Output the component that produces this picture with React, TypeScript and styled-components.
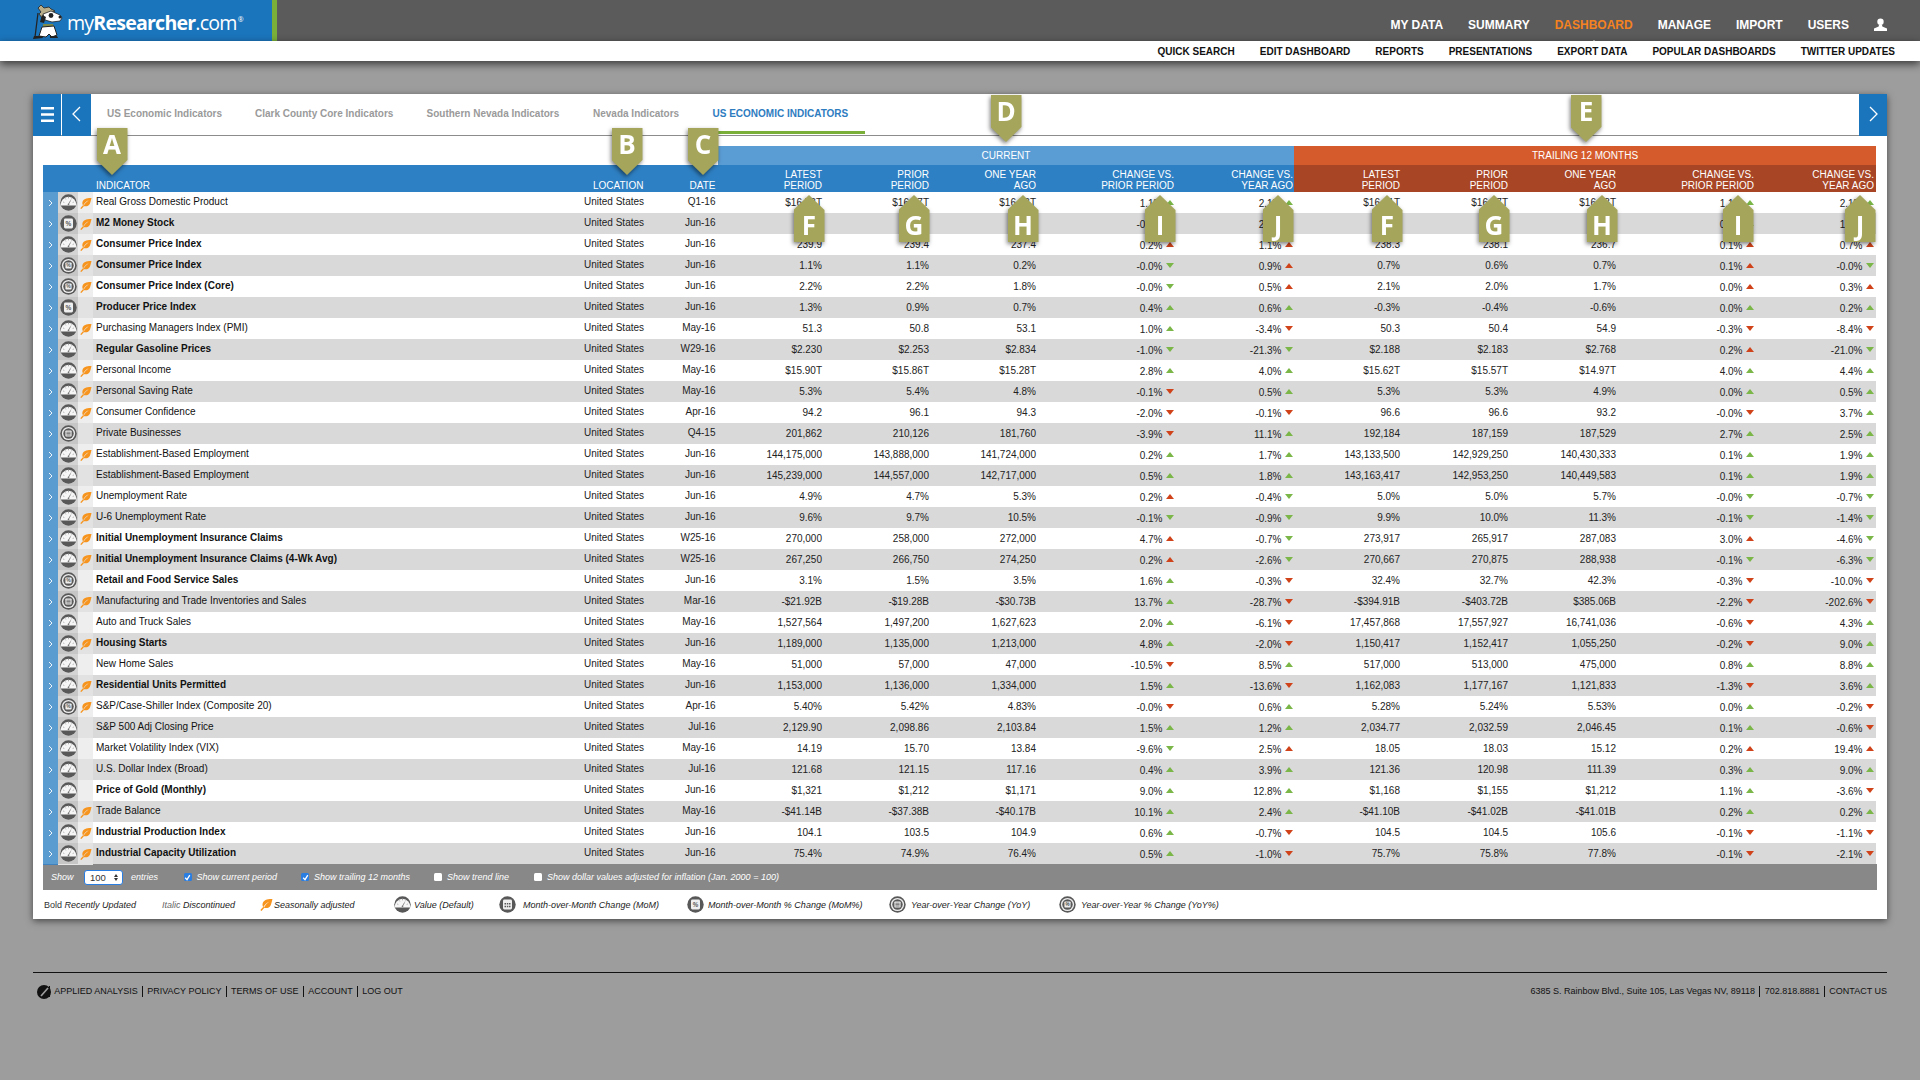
import React from "react";
import styled, { createGlobalStyle } from "styled-components";

const Global = createGlobalStyle`
  html, body { margin: 0; padding: 0; background: #9d9d9d; }
  body { font-family: "Liberation Sans", Arial, sans-serif; color: #222; height: 1080px; overflow: hidden; }
`;

const GRID =
  "15px 20px 15px 487px 70px 68px 107px 107px 107px 136px 119px 109px 108px 108px 136px 121px";

const Page = styled.div`
  width: 1920px;
  height: 1080px;
  position: relative;
`;

const TopBar = styled.header`
  height: 41px;
  background: #5b5b5b;
  display: flex;
  justify-content: space-between;
  align-items: stretch;
`;
const LogoBox = styled.div`
  width: 277px;
  background: #1b75bc;
  border-right: 5px solid #7ab03a;
  display: flex;
  align-items: center;
  padding-left: 33px;
  box-sizing: border-box;
`;
const LogoText = styled.div`
  font-family: "Open Sans", sans-serif;
  font-size: 19.6px;
  letter-spacing: -0.8px;
  color: #fff;
  margin: 3px 0 0 4px;
  white-space: nowrap;
  b { font-weight: 700; }
  sup { font-size: 7px; vertical-align: 8px; line-height: 0; margin-left: 1px; }
`;
const MainNav = styled.nav`
  display: flex;
  align-items: center;
  gap: 25px;
  padding-right: 33px;
  padding-top: 8px;
`;
const MainLink = styled.span<{ $active?: boolean }>`
  font-size: 12px;
  font-weight: 700;
  color: ${(p) => (p.$active ? "#f58220" : "#fff")};
  position: relative;
  ${(p) =>
    p.$active &&
    `&::after{content:"";position:absolute;left:50%;margin-left:-4px;bottom:-12px;border:4px solid transparent;border-top:0;border-bottom-color:#fff;}`}
`;
const SubBar = styled.div`
  height: 20px;
  background: #fff;
  box-shadow: 0 3px 9px rgba(0, 0, 0, 0.65);
  display: flex;
  justify-content: flex-end;
  align-items: center;
  gap: 25px;
  padding-right: 25px;
  position: relative;
`;
const SubLink = styled.span`
  font-size: 10px;
  font-weight: 700;
  color: #111;
`;

const Card = styled.main`
  position: relative;
  margin: 33px 0 0 33px;
  width: 1854px;
  height: 825px;
  background: #fff;
  box-shadow: 0 2px 7px rgba(0, 0, 0, 0.55);
`;
const TabBar = styled.div`
  height: 41px;
  border-bottom: 1px solid #8c8c8c;
  display: flex;
  align-items: stretch;
  box-sizing: content-box;
`;
const SquareButton = styled.div<{ $w: number }>`
  width: ${(p) => p.$w}px;
  background: #1b75bc;
  display: flex;
  align-items: center;
  justify-content: center;
  margin-bottom: -1px;
  padding-bottom: 2px;
  box-sizing: border-box;
`;
const Divider = styled.div`
  width: 1px;
  background: #fff;
`;
const Tabs = styled.div`
  flex: 1;
  display: flex;
  padding-left: 16px;
`;
const Tab = styled.div<{ $w: number; $active?: boolean }>`
  width: ${(p) => p.$w}px;
  font-size: 10px;
  font-weight: 700;
  color: ${(p) => (p.$active ? "#2e7cc0" : "#9a9a9a")};
  padding-top: 14px;
  white-space: nowrap;
  position: relative;
  ${(p) =>
    p.$active &&
    `&::after{content:"";position:absolute;left:-16px;width:168px;bottom:1px;height:3px;background:#7ab03a;}`}
`;

const TableBox = styled.div`
  margin: 10px 0 0 10px;
  width: 1833px;
`;
const GroupRow = styled.div`
  display: grid;
  grid-template-columns: 675px 576px 582px;
  height: 19px;
`;
const GroupCell = styled.div<{ $bg: string }>`
  background: ${(p) => p.$bg};
  color: #fff;
  font-size: 10px;
  display: flex;
  align-items: center;
  justify-content: center;
`;
const HeadRow = styled.div`
  display: grid;
  grid-template-columns: ${GRID};
  height: 27px;
`;
const HeadCell = styled.div<{ $bg: string; $pad?: number; $left?: boolean; $pl?: number }>`
  background: ${(p) => p.$bg};
  color: #fff;
  font-size: 10px;
  line-height: 11px;
  display: flex;
  align-items: flex-end;
  justify-content: ${(p) => (p.$left ? "flex-start" : "flex-end")};
  text-align: ${(p) => (p.$left ? "left" : "right")};
  padding: 0 ${(p) => p.$pad ?? 0}px 1px ${(p) => p.$pl ?? 0}px;
  white-space: pre-line;
`;
const Row = styled.div<{ $alt: boolean }>`
  display: grid;
  grid-template-columns: ${GRID};
  height: 21px;
  background: ${(p) => (p.$alt ? "#d9d9d9" : "#fff")};
  font-size: 10px;
  line-height: 21px;
`;
const ChevCell = styled.div`
  background: #5a9bd0;
  border-bottom: 1px solid #3f82bd;
  display: flex;
  align-items: center;
  justify-content: center;
`;
const IconCell = styled.div<{ $alt: boolean }>`
  background: ${(p) => (p.$alt ? "#c6c6c6" : "#d4d4d4")};
  border-bottom: 1px solid #e6e6e6;
  display: flex;
  align-items: center;
  justify-content: center;
`;
const LeafCell = styled.div<{ $alt: boolean }>`
  background: ${(p) => (p.$alt ? "#e2e2e2" : "#eeeeee")};
  display: flex;
  align-items: center;
  justify-content: center;
`;
const NameCell = styled.div<{ $bold: boolean }>`
  padding-left: 3px;
  font-weight: ${(p) => (p.$bold ? 700 : 400)};
  color: #111;
  margin-top: -1px;
  white-space: nowrap;
`;
const LocationCell = styled.div`
  padding-left: 4px;
  margin-top: -1px;
  white-space: nowrap;
`;
const DateCell = styled.div`
  text-align: right;
  padding-right: 2.5px;
  margin-top: -1px;
`;
const NumCell = styled.div`
  text-align: right;
  padding-right: 3px;
`;
const ChangeCell = styled.div<{ $pad: number }>`
  display: flex;
  justify-content: flex-end;
  align-items: center;
  gap: 3.5px;
  padding-right: ${(p) => p.$pad}px;
  padding-top: 1px;
  height: 21px;
`;
const Tri = styled.span<{ $up: boolean; $color: string }>`
  width: 0;
  height: 0;
  border-left: 4px solid transparent;
  border-right: 4px solid transparent;
  ${(p) => (p.$up ? "border-bottom" : "border-top")}: 5px solid ${(p) => p.$color};
  margin-top: -2px;
`;

const ControlBar = styled.div`
  width: 1834px;
  height: 26px;
  background: #888;
  color: #fff;
  font-size: 9px;
  font-style: italic;
  display: grid;
  grid-template-columns: 33px 47px 52.5px 117.5px 133px 100px auto;
  align-items: center;
  padding-left: 8px;
  box-sizing: border-box;
`;
const SelectBox = styled.div`
  width: 39px;
  height: 15px;
  border: 1px solid #2a7de1;
  border-radius: 3px;
  background: #fff;
  color: #333;
  font-style: normal;
  font-size: 9.5px;
  box-sizing: border-box;
  display: flex;
  align-items: center;
  justify-content: space-between;
  padding: 0 4px 0 5px;
`;
const Spin = styled.span`
  display: flex;
  flex-direction: column;
  gap: 1px;
`;
const SpinTri = styled.i<{ $up?: boolean }>`
  width: 0;
  height: 0;
  border-left: 2.5px solid transparent;
  border-right: 2.5px solid transparent;
  ${(p) => (p.$up ? "border-bottom" : "border-top")}: 3.5px solid #333;
`;
const CheckWrap = styled.label`
  display: flex;
  align-items: center;
  gap: 5px;
  white-space: nowrap;
`;
const CheckBox = styled.span<{ $on: boolean }>`
  width: 8px;
  height: 8px;
  border-radius: 1.5px;
  background: ${(p) => (p.$on ? "#2a7de1" : "#fff")};
  display: flex;
  align-items: center;
  justify-content: center;
`;
const Legend = styled.div`
  height: 29px;
  display: grid;
  grid-template-columns: 118px 98px 134px 105px 188px 202px 170px auto;
  align-items: center;
  padding-left: 1px;
  font-size: 9px;
  font-style: italic;
  color: #222;
`;
const LegendItem = styled.div<{ $gap?: number }>`
  display: flex;
  align-items: center;
  gap: ${(p) => p.$gap ?? 5}px;
  white-space: nowrap;
`;
const LegendTextRun = styled.span`
  white-space: pre;
`;
const LegendBold = styled.span`
  font-style: normal;
  color: #333;
`;
const LegendItal = styled.span`
  color: #666;
`;
const FootRule = styled.div`
  margin: 53px 0 0 33px;
  width: 1854px;
  border-top: 1px solid #111;
`;
const Foot = styled.footer`
  width: 1854px;
  margin: 11px 0 0 33px;
  display: flex;
  justify-content: space-between;
  align-items: center;
  font-size: 9px;
  color: #111;
  height: 15px;
`;
const FootGroup = styled.div`
  display: flex;
  align-items: center;
`;
const FootLink = styled.span`
  padding: 0 4.3px;
  border-left: 1px solid #111;
  line-height: 11px;
  white-space: nowrap;
  &:first-of-type { border-left: 0; }
  &:last-child { padding-right: 0; }
`;
const FootMark = styled.span`
  margin: 0 -2px 0 4px;
  display: flex;
`;

const BadgeWrap = styled.div<{ $x: number; $y: number }>`
  position: absolute;
  left: ${(p) => p.$x - 33 - 15.5}px;
  top: ${(p) => p.$y - 94}px;
  width: 31px;
  height: 47px;
  filter: drop-shadow(-1px 2px 2px rgba(0, 0, 0, 0.5));
`;
const BadgeShape = styled.div<{ $up?: boolean }>`
  width: 31px;
  height: 47px;
  background: #a5a65b;
  color: #fff;
  font-family: "Open Sans", sans-serif;
  font-weight: 700;
  font-size: 26px;
  text-align: center;
  line-height: 33px;
  box-sizing: border-box;
  padding-top: ${(p) => (p.$up ? 14 : 0)}px;
  clip-path: ${(p) =>
    p.$up
      ? "polygon(50% 0, 100% 15px, 100% 100%, 0 100%, 0 15px)"
      : "polygon(0 0, 100% 0, 100% 32px, 50% 100%, 0 32px)"};
`;

const Badge = ({ l, x, y, up }: { l: string; x: number; y: number; up?: boolean }) => (
  <BadgeWrap $x={x} $y={y}>
    <BadgeShape $up={up}>{l}</BadgeShape>
  </BadgeWrap>
);

type Kind = "g" | "m" | "mp" | "y" | "yp";

const MetricIcon = ({ kind, size = 17 }: { kind: Kind; size?: number }) => {
  const dk = "#585858";
  const ring = kind === "y" || kind === "yp";
  return (
    <svg width={size} height={size} viewBox="0 0 17 17">
      <circle cx="8.5" cy="8.5" r="8.2" fill={dk} />
      {kind === "g" && (
        <>
          <path d="M1 11.6A7.6 7.6 0 1 1 16 11.6Z" fill="#f6f6f6" />
          <path d="M3.2 8l1.1.5M5.2 4.4l.7 1M8.5 3v1.3M11.8 4.4l-.7 1M13.8 8l-1.1.5" stroke="#8a8a8a" strokeWidth="0.7" />
          <path d="M8.5 10.2L10.6 6.4" stroke="#777" strokeWidth="0.8" />
          <circle cx="8.5" cy="10.4" r="0.8" fill="#777" />
        </>
      )}
      {ring && (
        <>
          <circle cx="8.5" cy="8.5" r="6.6" fill="#eee" />
          <circle cx="8.5" cy="8.5" r="5.2" fill={dk} />
        </>
      )}
      {(kind === "m" || kind === "mp") && (
        <rect x="4" y="3.6" width="9" height="9.8" rx="1.4" fill="#efefef" />
      )}
      {ring && <rect x="5.4" y="5.4" width="6.2" height="6.2" rx="0.8" fill="#efefef" />}
      {kind === "m" && (
        <path d="M5.5 7h1.5v1.5H5.5zM7.8 7h1.5v1.5H7.8zM10 7h1.5v1.5H10zM5.5 9.8h1.5v1.5H5.5zM7.8 9.8h1.5v1.5H7.8zM10 9.8h1.5v1.5H10z" fill={dk} />
      )}
      {kind === "y" && <path d="M6.4 7.2h4.2M6.4 8.6h4.2M6.4 10h4.2" stroke={dk} strokeWidth="0.8" />}
      {kind === "mp" && (
        <text x="8.5" y="11" fontSize="6.5" textAnchor="middle" fill={dk} fontFamily="Liberation Sans" fontWeight="700">%</text>
      )}
      {kind === "yp" && (
        <text x="8.5" y="10.4" fontSize="5" textAnchor="middle" fill={dk} fontFamily="Liberation Sans" fontWeight="700">%</text>
      )}
    </svg>
  );
};

const Leaf = ({ size = 12 }: { size?: number }) => (
  <svg width={size} height={size} viewBox="0 0 12 12">
    <path d="M11.5 1C7.2.8 3 1.8 2.4 5.2 2.1 6.6 2.5 7.7 3.2 8.4 4.4 5.8 6.4 4.2 8.8 3.2 6.6 4.8 4.6 6.7 3.6 8.9 5.6 9.8 8.8 9.2 10 6.4 10.7 4.8 11 3 11.5 1Z" fill="#f7941e" />
    <path d="M.8 11.6L3.6 8.5" stroke="#f7941e" strokeWidth="1.3" fill="none" />
  </svg>
);

const Chevron = ({ dir, size, color, w }: { dir: "l" | "r"; size: number; color: string; w: number }) => (
  <svg width={size / 2 + 2} height={size + 2} viewBox={`0 0 ${size / 2 + 2} ${size + 2}`}>
    <polyline
      points={
        dir === "r"
          ? `1,1 ${size / 2 + 1},${size / 2 + 1} 1,${size + 1}`
          : `${size / 2 + 1},1 1,${size / 2 + 1} ${size / 2 + 1},${size + 1}`
      }
      fill="none"
      stroke={color}
      strokeWidth={w}
    />
  </svg>
);

const Hamburger = () => (
  <svg width="13" height="15" viewBox="0 0 13 15">
    <path d="M0 1.2h13M0 7.5h13M0 13.8h13" stroke="#fff" strokeWidth="2.4" />
  </svg>
);

const UserIcon = () => (
  <svg width="13" height="14" viewBox="0 0 13 14">
    <circle cx="6.5" cy="3.8" r="3.2" fill="#fff" />
    <path d="M5 6.5h3l.3 2L13 10.6V13H0v-2.4l4.7-2.1Z" fill="#fff" />
  </svg>
);

const Dog = () => (
  <svg width="30" height="36" viewBox="0 0 30 36">
    <path d="M8 2l3 3 5-1 2 2 4 2-4 2 1 3-9 3-4-5 2-2-3-4Z" fill="#b9ae8a" stroke="#222" strokeWidth="0.8" />
    <path d="M10 11l8-3 9 4 2 3-2 3-8 1-7-2Z" fill="#fff" stroke="#222" strokeWidth="0.8" />
    <circle cx="18" cy="12.5" r="2.4" fill="#222" />
    <circle cx="27" cy="14" r="1.5" fill="#222" />
    <path d="M9 12l-2 7 4 1 2-6Z" fill="#222" />
    <path d="M10 21h10l1 3-11 1Z" fill="#7d8a4a" />
    <path d="M9 24l12-1 3 9-5 2-3-3-3 3-7-1Z" fill="#fff" stroke="#222" strokeWidth="1" />
    <path d="M5 10L2 34" stroke="#222" strokeWidth="1.2" />
    <path d="M1 33l8 0 1 2-10 1Z" fill="#222" />
    <path d="M17 33h7l1 2h-8Z" fill="#222" />
  </svg>
);

const Mark = () => (
  <svg width="14" height="14" viewBox="0 0 14 14">
    <circle cx="7" cy="7" r="7" fill="#111" />
    <path d="M4 11L11 3" stroke="#9d9d9d" strokeWidth="1.6" />
  </svg>
);

const Check = () => (
  <svg width="7" height="7" viewBox="0 0 7 7">
    <path d="M1.2 3.8L3 5.6 5.8 1.2" stroke="#fff" strokeWidth="1.3" fill="none" />
  </svg>
);

type Rec = {
  n: string; b?: boolean; k: Kind; lf?: boolean; d: string;
  v: [string, string, string, string, string, string, string, string, string, string];
};
const G = "#7ab648";
const R = "#d0431a";

const rows: Rec[] = [
  { n: "Real Gross Domestic Product", k: "g", lf: true, d: "Q1-16", v: ["$16.53T", "$16.47T", "$16.03T", "1.1%|ug", "2.1%|ug", "$16.41T", "$16.27T", "$16.08T", "1.1%|ug", "2.1%|ug"] },
  { n: "M2 Money Stock", b: true, k: "mp", lf: true, d: "Jun-16", v: ["0.6%", "0.4%", "0.5%", "-0.6%|ug", "2.1%|ug", "0.5%", "0.5%", "0.5%", "0.9%|ug", "1.9%|ug"] },
  { n: "Consumer Price Index", b: true, k: "g", lf: true, d: "Jun-16", v: ["239.9", "239.4", "237.4", "0.2%|ur", "1.1%|ur", "238.3", "238.1", "236.7", "0.1%|ur", "0.7%|ur"] },
  { n: "Consumer Price Index", b: true, k: "yp", lf: true, d: "Jun-16", v: ["1.1%", "1.1%", "0.2%", "-0.0%|dg", "0.9%|ur", "0.7%", "0.6%", "0.7%", "0.1%|ur", "-0.0%|dg"] },
  { n: "Consumer Price Index (Core)", b: true, k: "yp", lf: true, d: "Jun-16", v: ["2.2%", "2.2%", "1.8%", "-0.0%|dg", "0.5%|ur", "2.1%", "2.0%", "1.7%", "0.0%|ur", "0.3%|ur"] },
  { n: "Producer Price Index", b: true, k: "mp", d: "Jun-16", v: ["1.3%", "0.9%", "0.7%", "0.4%|ug", "0.6%|ug", "-0.3%", "-0.4%", "-0.6%", "0.0%|ug", "0.2%|ug"] },
  { n: "Purchasing Managers Index (PMI)", k: "g", lf: true, d: "May-16", v: ["51.3", "50.8", "53.1", "1.0%|ug", "-3.4%|dr", "50.3", "50.4", "54.9", "-0.3%|dr", "-8.4%|dr"] },
  { n: "Regular Gasoline Prices", b: true, k: "g", d: "W29-16", v: ["$2.230", "$2.253", "$2.834", "-1.0%|dg", "-21.3%|dg", "$2.188", "$2.183", "$2.768", "0.2%|ur", "-21.0%|dg"] },
  { n: "Personal Income", k: "g", lf: true, d: "May-16", v: ["$15.90T", "$15.86T", "$15.28T", "2.8%|ug", "4.0%|ug", "$15.62T", "$15.57T", "$14.97T", "4.0%|ug", "4.4%|ug"] },
  { n: "Personal Saving Rate", k: "g", lf: true, d: "May-16", v: ["5.3%", "5.4%", "4.8%", "-0.1%|dr", "0.5%|ug", "5.3%", "5.3%", "4.9%", "0.0%|ug", "0.5%|ug"] },
  { n: "Consumer Confidence", k: "g", lf: true, d: "Apr-16", v: ["94.2", "96.1", "94.3", "-2.0%|dr", "-0.1%|dr", "96.6", "96.6", "93.2", "-0.0%|dr", "3.7%|ug"] },
  { n: "Private Businesses", k: "y", d: "Q4-15", v: ["201,862", "210,126", "181,760", "-3.9%|dr", "11.1%|ug", "192,184", "187,159", "187,529", "2.7%|ug", "2.5%|ug"] },
  { n: "Establishment-Based Employment", k: "g", lf: true, d: "Jun-16", v: ["144,175,000", "143,888,000", "141,724,000", "0.2%|ug", "1.7%|ug", "143,133,500", "142,929,250", "140,430,333", "0.1%|ug", "1.9%|ug"] },
  { n: "Establishment-Based Employment", k: "g", d: "Jun-16", v: ["145,239,000", "144,557,000", "142,717,000", "0.5%|ug", "1.8%|ug", "143,163,417", "142,953,250", "140,449,583", "0.1%|ug", "1.9%|ug"] },
  { n: "Unemployment Rate", k: "g", lf: true, d: "Jun-16", v: ["4.9%", "4.7%", "5.3%", "0.2%|ur", "-0.4%|dg", "5.0%", "5.0%", "5.7%", "-0.0%|dg", "-0.7%|dg"] },
  { n: "U-6 Unemployment Rate", k: "g", lf: true, d: "Jun-16", v: ["9.6%", "9.7%", "10.5%", "-0.1%|dg", "-0.9%|dg", "9.9%", "10.0%", "11.3%", "-0.1%|dg", "-1.4%|dg"] },
  { n: "Initial Unemployment Insurance Claims", b: true, k: "g", lf: true, d: "W25-16", v: ["270,000", "258,000", "272,000", "4.7%|ur", "-0.7%|dg", "273,917", "265,917", "287,083", "3.0%|ur", "-4.6%|dg"] },
  { n: "Initial Unemployment Insurance Claims (4-Wk Avg)", b: true, k: "g", lf: true, d: "W25-16", v: ["267,250", "266,750", "274,250", "0.2%|ur", "-2.6%|dg", "270,667", "270,875", "288,938", "-0.1%|dg", "-6.3%|dg"] },
  { n: "Retail and Food Service Sales", b: true, k: "yp", d: "Jun-16", v: ["3.1%", "1.5%", "3.5%", "1.6%|ug", "-0.3%|dr", "32.4%", "32.7%", "42.3%", "-0.3%|dr", "-10.0%|dr"] },
  { n: "Manufacturing and Trade Inventories and Sales", k: "y", lf: true, d: "Mar-16", v: ["-$21.92B", "-$19.28B", "-$30.73B", "13.7%|ug", "-28.7%|dr", "-$394.91B", "-$403.72B", "$385.06B", "-2.2%|dr", "-202.6%|dr"] },
  { n: "Auto and Truck Sales", k: "g", d: "May-16", v: ["1,527,564", "1,497,200", "1,627,623", "2.0%|ug", "-6.1%|dr", "17,457,868", "17,557,927", "16,741,036", "-0.6%|dr", "4.3%|ug"] },
  { n: "Housing Starts", b: true, k: "g", lf: true, d: "Jun-16", v: ["1,189,000", "1,135,000", "1,213,000", "4.8%|ug", "-2.0%|dr", "1,150,417", "1,152,417", "1,055,250", "-0.2%|dr", "9.0%|ug"] },
  { n: "New Home Sales", k: "g", d: "May-16", v: ["51,000", "57,000", "47,000", "-10.5%|dr", "8.5%|ug", "517,000", "513,000", "475,000", "0.8%|ug", "8.8%|ug"] },
  { n: "Residential Units Permitted", b: true, k: "g", lf: true, d: "Jun-16", v: ["1,153,000", "1,136,000", "1,334,000", "1.5%|ug", "-13.6%|dr", "1,162,083", "1,177,167", "1,121,833", "-1.3%|dr", "3.6%|ug"] },
  { n: "S&P/Case-Shiller Index (Composite 20)", k: "yp", lf: true, d: "Apr-16", v: ["5.40%", "5.42%", "4.83%", "-0.0%|dr", "0.6%|ug", "5.28%", "5.24%", "5.53%", "0.0%|ug", "-0.2%|dr"] },
  { n: "S&P 500 Adj Closing Price", k: "g", d: "Jul-16", v: ["2,129.90", "2,098.86", "2,103.84", "1.5%|ug", "1.2%|ug", "2,034.77", "2,032.59", "2,046.45", "0.1%|ug", "-0.6%|dr"] },
  { n: "Market Volatility Index (VIX)", k: "g", d: "May-16", v: ["14.19", "15.70", "13.84", "-9.6%|dg", "2.5%|ur", "18.05", "18.03", "15.12", "0.2%|ur", "19.4%|ur"] },
  { n: "U.S. Dollar Index (Broad)", k: "g", d: "Jul-16", v: ["121.68", "121.15", "117.16", "0.4%|ug", "3.9%|ug", "121.36", "120.98", "111.39", "0.3%|ug", "9.0%|ug"] },
  { n: "Price of Gold (Monthly)", b: true, k: "g", d: "Jun-16", v: ["$1,321", "$1,212", "$1,171", "9.0%|ug", "12.8%|ug", "$1,168", "$1,155", "$1,212", "1.1%|ug", "-3.6%|dr"] },
  { n: "Trade Balance", k: "g", lf: true, d: "May-16", v: ["-$41.14B", "-$37.38B", "-$40.17B", "10.1%|ug", "2.4%|ug", "-$41.10B", "-$41.02B", "-$41.01B", "0.2%|ug", "0.2%|ug"] },
  { n: "Industrial Production Index", b: true, k: "g", lf: true, d: "Jun-16", v: ["104.1", "103.5", "104.9", "0.6%|ug", "-0.7%|dr", "104.5", "104.5", "105.6", "-0.1%|dr", "-1.1%|dr"] },
  { n: "Industrial Capacity Utilization", b: true, k: "g", lf: true, d: "Jun-16", v: ["75.4%", "74.9%", "76.4%", "0.5%|ug", "-1.0%|dr", "75.7%", "75.8%", "77.8%", "-0.1%|dr", "-2.1%|dr"] },
];

const Change = ({ s, pad }: { s: string; pad: number }) => {
  const [val, code] = s.split("|");
  return (
    <ChangeCell $pad={pad}>
      <span>{val}</span>
      <Tri $up={code[0] === "u"} $color={code[1] === "g" ? G : R} />
    </ChangeCell>
  );
};

const BLUE = "#2e80c4";
const RUST = "#a84525";
const heads: [string, string, number][] = [
  ["LATEST\nPERIOD", BLUE, 3],
  ["PRIOR\nPERIOD", BLUE, 3],
  ["ONE YEAR\nAGO", BLUE, 3],
  ["CHANGE VS.\nPRIOR PERIOD", BLUE, 1],
  ["CHANGE VS.\nYEAR AGO", BLUE, 1],
  ["LATEST\nPERIOD", RUST, 3],
  ["PRIOR\nPERIOD", RUST, 3],
  ["ONE YEAR\nAGO", RUST, 3],
  ["CHANGE VS.\nPRIOR PERIOD", RUST, 1],
  ["CHANGE VS.\nYEAR AGO", RUST, 2],
];

const down: [string, number, number][] = [
  ["A", 112, 128], ["B", 627, 128], ["C", 703, 128], ["D", 1006, 95], ["E", 1586, 95],
];
const up: [string, number][] = [
  ["F", 809], ["G", 914], ["H", 1023], ["I", 1160], ["J", 1278],
  ["F", 1387], ["G", 1494], ["H", 1602], ["I", 1738], ["J", 1860],
];

const PAD = [0, 0, 0, 1, 1, 0, 0, 0, 1, 2];

export default function App() {
  return (
    <Page>
      <Global />
      <TopBar>
        <LogoBox>
          <Dog />
          <LogoText>my<b>Researcher</b>.com<sup>®</sup></LogoText>
        </LogoBox>
        <MainNav>
          <MainLink>MY DATA</MainLink>
          <MainLink>SUMMARY</MainLink>
          <MainLink $active>DASHBOARD</MainLink>
          <MainLink>MANAGE</MainLink>
          <MainLink>IMPORT</MainLink>
          <MainLink>USERS</MainLink>
          <UserIcon />
        </MainNav>
      </TopBar>
      <SubBar>
        {["QUICK SEARCH", "EDIT DASHBOARD", "REPORTS", "PRESENTATIONS", "EXPORT DATA", "POPULAR DASHBOARDS", "TWITTER UPDATES"].map((t) => (
          <SubLink key={t}>{t}</SubLink>
        ))}
      </SubBar>
      <Card>
        <TabBar>
          <SquareButton $w={28}><Hamburger /></SquareButton>
          <Divider />
          <SquareButton $w={29}><Chevron dir="l" size={14} color="#fff" w={1.3} /></SquareButton>
          <Tabs>
            <Tab $w={148}>US Economic Indicators</Tab>
            <Tab $w={171.5}>Clark County Core Indicators</Tab>
            <Tab $w={166.5}>Southern Nevada Indicators</Tab>
            <Tab $w={119.5}>Nevada Indicators</Tab>
            <Tab $w={800} $active>US ECONOMIC INDICATORS</Tab>
          </Tabs>
          <SquareButton $w={28}><Chevron dir="r" size={14} color="#fff" w={1.3} /></SquareButton>
        </TabBar>
        <TableBox>
          <GroupRow>
            <div />
            <GroupCell $bg="#5a9dd5">CURRENT</GroupCell>
            <GroupCell $bg="#d55b2d">TRAILING 12 MONTHS</GroupCell>
          </GroupRow>
          <HeadRow>
            <HeadCell $bg={BLUE} />
            <HeadCell $bg={BLUE} />
            <HeadCell $bg={BLUE} />
            <HeadCell $bg={BLUE} $left $pl={3}>INDICATOR</HeadCell>
            <HeadCell $bg={BLUE} $left $pl={13}>LOCATION</HeadCell>
            <HeadCell $bg={BLUE} $pad={2.5}>DATE</HeadCell>
            {heads.map(([t, bg, pad], i) => (
              <HeadCell key={i} $bg={bg} $pad={pad}>{t}</HeadCell>
            ))}
          </HeadRow>
          {rows.map((r, i) => {
            const alt = i % 2 === 1;
            return (
              <Row key={i} $alt={alt}>
                <ChevCell><Chevron dir="r" size={6} color="#fff" w={0.9} /></ChevCell>
                <IconCell $alt={alt}><MetricIcon kind={r.k} /></IconCell>
                <LeafCell $alt={alt}>{r.lf && <Leaf size={12} />}</LeafCell>
                <NameCell $bold={!!r.b}>{r.n}</NameCell>
                <LocationCell>United States</LocationCell>
                <DateCell>{r.d}</DateCell>
                {r.v.map((v, j) =>
                  v.includes("|") ? <Change key={j} s={v} pad={PAD[j]} /> : <NumCell key={j}>{v}</NumCell>
                )}
              </Row>
            );
          })}
          <ControlBar>
            <span>Show</span>
            <SelectBox>100<Spin><SpinTri $up /><SpinTri /></Spin></SelectBox>
            <span>entries</span>
            <CheckWrap><CheckBox $on><Check /></CheckBox>Show current period</CheckWrap>
            <CheckWrap><CheckBox $on><Check /></CheckBox>Show trailing 12 months</CheckWrap>
            <CheckWrap><CheckBox $on={false} />Show trend line</CheckWrap>
            <CheckWrap><CheckBox $on={false} />Show dollar values adjusted for inflation (Jan. 2000 = 100)</CheckWrap>
          </ControlBar>
          <Legend>
            <LegendItem><LegendTextRun><LegendBold>Bold</LegendBold> Recently Updated</LegendTextRun></LegendItem>
            <LegendItem><LegendTextRun><LegendItal>Italic</LegendItal> Discontinued</LegendTextRun></LegendItem>
            <LegendItem $gap={1}><Leaf size={13} />Seasonally adjusted</LegendItem>
            <LegendItem $gap={3}><MetricIcon kind="g" />Value (Default)</LegendItem>
            <LegendItem $gap={7}><MetricIcon kind="m" />Month-over-Month Change (MoM)</LegendItem>
            <LegendItem $gap={4}><MetricIcon kind="mp" />Month-over-Month % Change (MoM%)</LegendItem>
            <LegendItem><MetricIcon kind="y" />Year-over-Year Change (YoY)</LegendItem>
            <LegendItem><MetricIcon kind="yp" />Year-over-Year % Change (YoY%)</LegendItem>
          </Legend>
        </TableBox>
        {down.map(([l, x, y]) => (
          <Badge key={l} l={l} x={x} y={y} />
        ))}
        {up.map(([l, x], i) => (
          <Badge key={i} l={l} x={x} y={195} up />
        ))}
      </Card>
      <FootRule />
      <Foot>
        <FootGroup>
          <FootMark><Mark /></FootMark>
          <FootLink>APPLIED ANALYSIS</FootLink>
          <FootLink>PRIVACY POLICY</FootLink>
          <FootLink>TERMS OF USE</FootLink>
          <FootLink>ACCOUNT</FootLink>
          <FootLink>LOG OUT</FootLink>
        </FootGroup>
        <FootGroup>
          <FootLink>6385 S. Rainbow Blvd., Suite 105, Las Vegas NV, 89118</FootLink>
          <FootLink>702.818.8881</FootLink>
          <FootLink>CONTACT US</FootLink>
        </FootGroup>
      </Foot>
    </Page>
  );
}
